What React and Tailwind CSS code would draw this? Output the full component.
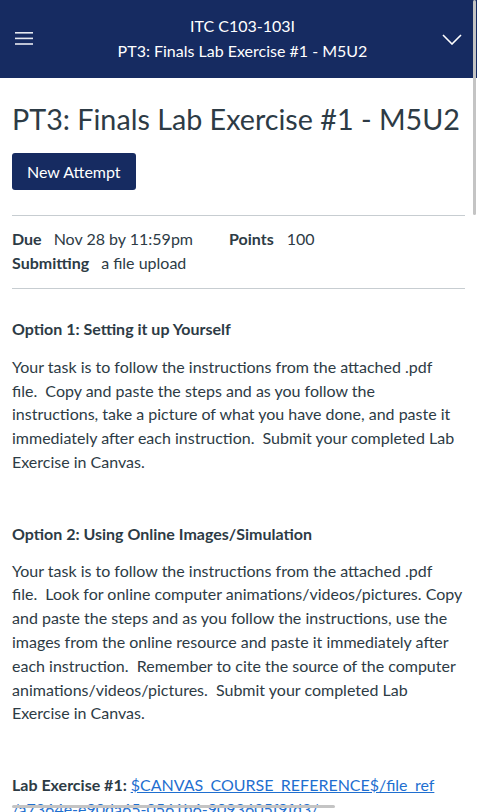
import React from "react";

function Header() {
  return (
    <div className="h-[78px] bg-[#162b61] text-white flex items-center px-[15px]">
      <svg width="18" height="14" viewBox="0 0 18 14" className="shrink-0">
        <rect x="0" y="0" width="18" height="1.6" fill="#e6e9f0" />
        <rect x="0" y="5.6" width="18" height="1.6" fill="#e6e9f0" />
        <rect x="0" y="11.2" width="18" height="1.6" fill="#e6e9f0" />
      </svg>
      <div className="flex-1 pl-[10px] pb-[2px] text-center text-[16px] leading-[25px]">
        <div>ITC C103-103I</div>
        <div>PT3: Finals Lab Exercise #1 - M5U2</div>
      </div>
      <svg width="20" height="11" viewBox="0 0 20 11" className="shrink-0">
        <path d="M1 1 L10 10 L19 1" fill="none" stroke="#ffffff" strokeWidth="1.6" />
      </svg>
    </div>
  );
}

export default function App() {
  return (
    <div className="relative w-[477px] h-[812px] overflow-hidden bg-white text-[#2d3b45] font-['Lato',sans-serif]">
      <Header />
      <div className="px-[12px]">
        <h1 className="text-[28.7px] leading-[34px] font-normal pt-[24px]">PT3: Finals Lab Exercise #1 - M5U2</h1>
        <button className="mt-[17px] h-[37px] px-[15px] rounded-[3px] bg-[#162b61] text-white text-[16px]">New Attempt</button>
        <div className="mt-[25px] border-t border-[#c7cdd1]" />
        <div className="pt-[11px] pb-[13px] text-[16px] leading-[24px]">
          <div>
            <span className="font-bold">Due</span>
            <span className="ml-[12px]">Nov 28 by 11:59pm</span>
            <span className="font-bold ml-[36px]">Points</span>
            <span className="ml-[13px]">100</span>
          </div>
          <div>
            <span className="font-bold">Submitting</span>
            <span className="ml-[12px]">a file upload</span>
          </div>
        </div>
        <div className="border-t border-[#c7cdd1]" />
        <div className="text-[16px] leading-[23.8px] pt-[28px]">
          <p className="font-bold">Option 1: Setting it up Yourself</p>
          <p className="mt-[14px]">
            Your task is to follow the instructions from the attached .pdf file.&nbsp; Copy and paste the steps and as you follow the instructions, take a picture of what you have done, and paste it immediately after each instruction.&nbsp; Submit your completed Lab Exercise in Canvas.
          </p>
          <p className="mt-[48px] font-bold">Option 2: Using Online Images/Simulation</p>
          <p className="mt-[13px]">
            Your task is to follow the instructions from the attached .pdf file.&nbsp; Look for online computer animations/videos/pictures. Copy and paste the steps and as you follow the instructions, use the images from the online resource and paste it immediately after each instruction.&nbsp; Remember to cite the source of the computer animations/videos/pictures.&nbsp; Submit your completed Lab Exercise in Canvas.
          </p>
          <p className="mt-[48px]">
            <span className="font-bold">Lab Exercise #1: </span>
            <a href="#" className="text-[#1f6fd0] underline">
              $CANVAS_COURSE_REFERENCE$/file_ref
              <br />
              /a7364e-e90da65-0561b6-9093605f9fd3/
            </a>
          </p>
        </div>
      </div>
      <div className="absolute right-[1px] top-0 w-[3px] h-[215px] rounded-full bg-[#c4c4c4]" />
      <div className="absolute left-[12px] bottom-[4px] h-[3px] w-[323px] rounded-full bg-[#c4c4c4]" />
    </div>
  );
}
